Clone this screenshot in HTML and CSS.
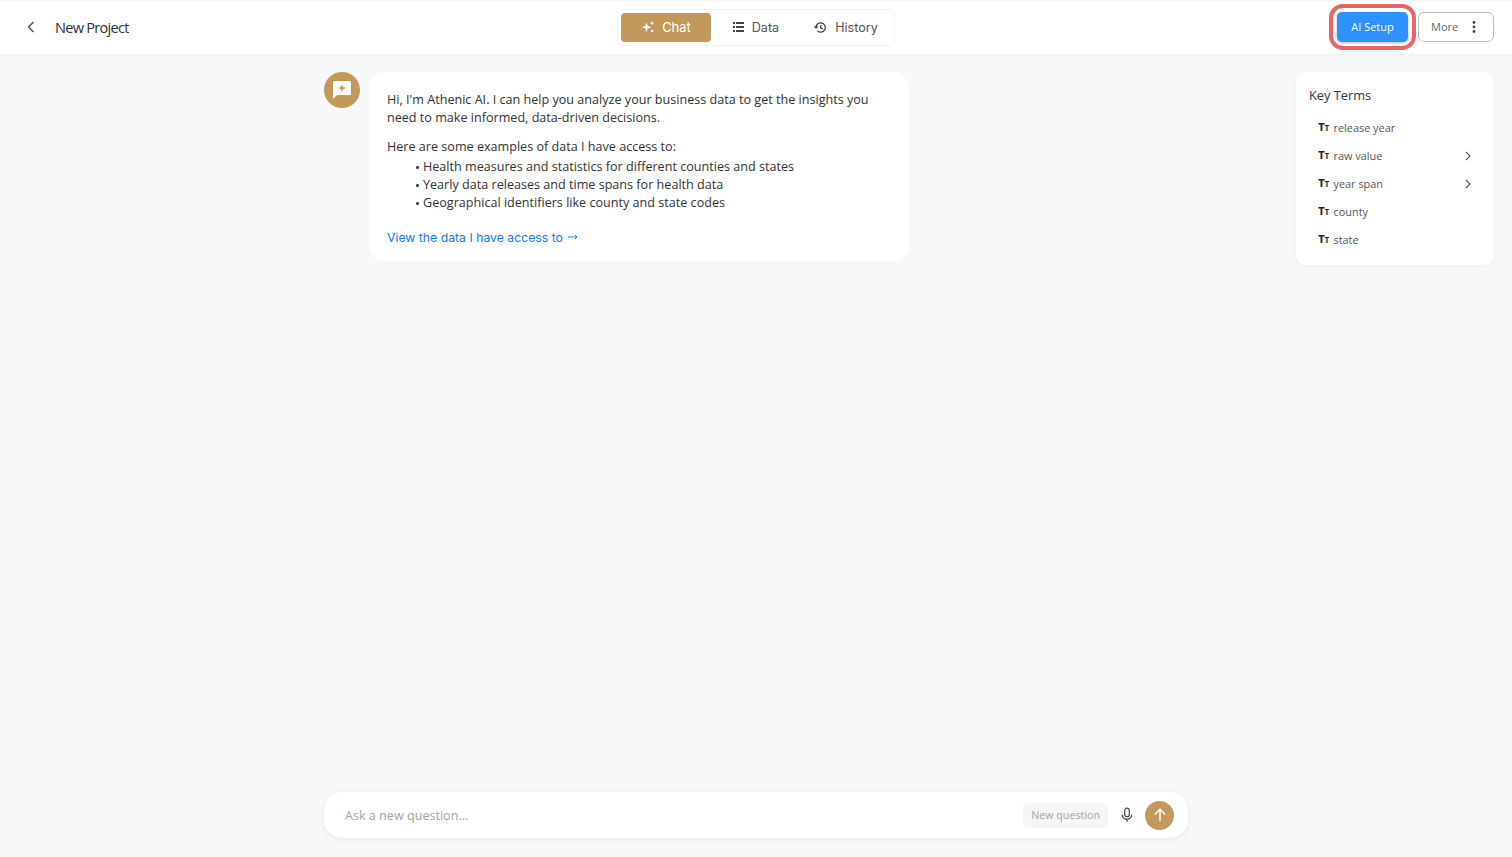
FILE: index.html
```html
<!DOCTYPE html>
<html>

<head>
    <title>New Project</title>
    <link rel="stylesheet" href="styles.css">
</head>

<body>
    <!-- Top bar -->
    <header class="topbar">
        <div class="topbar-left">
            <svg class="back-icon" width="16" height="16" viewBox="0 0 16 16" fill="none" stroke="#555" stroke-width="1.5">
                <path d="M10.5 3 5.500 8l5 5" />
            </svg>
            <span class="project-title">New Project</span>
        </div>
        <nav class="tabs">
            <div class="tab tab-active">
                <svg width="14" height="14" viewBox="0 0 14 14" fill="#fff">
                    <path d="M5.500 2.500 6.800 6 10.200 7.300 6.800 8.600 5.500 12 4.200 8.600 .8 7.300 4.200 6Z" />
                    <path d="M11 1 11.600 2.600 13.200 3.200 11.600 3.800 11 5.400 10.400 3.800 8.800 3.200 10.400 2.600Z" />
                    <circle cx="11.200" cy="11" r="1.200" />
                </svg>
                Chat
            </div>
            <div class="tab tab-data">
                <svg width="11" height="10" viewBox="0 0 11 10" fill="#444">
                    <rect x="0" y="0" width="2" height="2" />
                    <rect x="3" y="0" width="8" height="2" />
                    <rect x="0" y="4" width="2" height="2" />
                    <rect x="3" y="4" width="8" height="2" />
                    <rect x="0" y="8" width="2" height="2" />
                    <rect x="3" y="8" width="8" height="2" />
                </svg>
                Data
            </div>
            <div class="tab tab-history">
                <svg width="13" height="13" viewBox="0 0 14 14" fill="none" stroke="#444" stroke-width="1.400">
                    <path d="M2.200 7a5 5 0 1 1 1.500 3.600" />
                    <path d="M.6 5.600 2.200 7.400 4 5.800" />
                    <path d="M7.200 4.200V7.400L9.400 8.600" />
                </svg>
                History
            </div>
        </nav>
        <div class="topbar-right">
            <div class="setup-ring">
                <button class="setup-button">AI Setup</button>
            </div>
            <button class="more-button">
                More
                <svg width="4" height="12" viewBox="0 0 4 12" fill="#444">
                    <circle cx="2" cy="1.500" r="1.400" />
                    <circle cx="2" cy="6" r="1.400" />
                    <circle cx="2" cy="10.500" r="1.400" />
                </svg>
            </button>
        </div>
    </header>

    <main class="content">
        <div class="spacer"></div>

        <!-- Chat column -->
        <section class="chat">
            <div class="messages">
                <div class="avatar">
                    <svg width="20" height="20" viewBox="0 0 20 20">
                        <path fill="#fff" d="M2.500 1h15A1.500 1.500 0 0 1 19 2.500v11a1.500 1.500 0 0 1-1.500 1.500H5L1 19V2.500A1.500 1.500 0 0 1 2.500 1Z" />
                        <path fill="#c1995a" d="M10 4.200 11.100 7 13.900 8.100 11.100 9.200 10 12 8.900 9.200 6.100 8.100 8.900 7Z" />
                    </svg>
                </div>
                <div class="bubble">
                    <p class="intro">Hi, I'm Athenic AI. I can help you analyze your business data to get the insights you need to make informed, data-driven decisions.</p>
                    <p class="list-title">Here are some examples of data I have access to:</p>
                    <ul class="examples">
                        <li>Health measures and statistics for different counties and states</li>
                        <li>Yearly data releases and time spans for health data</li>
                        <li>Geographical identifiers like county and state codes</li>
                    </ul>
                    <a class="data-link" href="#">View the data I have access to
                        <svg width="10" height="6" viewBox="0 0 10 6" fill="none" stroke="#1677ff" stroke-width="1"><path d="M0 3h9M7 1l2 2-2 2" /></svg>
                    </a>
                </div>
            </div>

            <!-- Question box -->
            <div class="ask-bar">
                <span class="ask-placeholder">Ask a new question...</span>
                <span class="new-question">New question</span>
                <svg class="mic" width="12" height="16" viewBox="0 0 14 18" fill="none" stroke="#444" stroke-width="1.400">
                    <rect x="4.300" y="1" width="5.400" height="10" rx="2.700" />
                    <path d="M1.500 8.500a5.500 5.500 0 0 0 11 0" />
                    <path d="M7 14v3" />
                </svg>
                <div class="send">
                    <svg width="14" height="14" viewBox="0 0 14 14" fill="none" stroke="#fff" stroke-width="1.500">
                        <path d="M7 13V1.500" />
                        <path d="M1.800 6.500 7 1.300l5.200 5.200" />
                    </svg>
                </div>
            </div>
        </section>

        <!-- Key terms -->
        <div class="side">
            <aside class="terms">
                <h2>Key Terms</h2>
                <ul class="term-list">
                    <li><span class="tt">T<small>T</small></span>release year</li>
                    <li><span class="tt">T<small>T</small></span>raw value
                        <svg class="chevron" width="8" height="10" viewBox="0 0 8 10" fill="none" stroke="#555" stroke-width="1.100"><path d="M2 1l4 4-4 4" /></svg>
                    </li>
                    <li><span class="tt">T<small>T</small></span>year span
                        <svg class="chevron" width="8" height="10" viewBox="0 0 8 10" fill="none" stroke="#555" stroke-width="1.100"><path d="M2 1l4 4-4 4" /></svg>
                    </li>
                    <li><span class="tt">T<small>T</small></span>county</li>
                    <li><span class="tt">T<small>T</small></span>state</li>
                </ul>
            </aside>
        </div>
    </main>
</body>

</html>
```
FILE: styles.css
```css
* {
    box-sizing: border-box;
}

body {
    margin: 0;
    height: 100vh;
    display: flex;
    flex-direction: column;
    overflow: hidden;
    font-family: 'Open Sans', sans-serif;
    background-color: #f7f8fa;
    color: #333;
}

.topbar {
    margin-top: 1px;
    height: 53px;
    padding-bottom: 1px;
    flex-shrink: 0;
    display: grid;
    grid-template-columns: 1fr auto 1fr;
    align-items: center;
    background-color: #fff;
    box-shadow: 0 1px 4px rgba(0, 0, 0, 0.05);
}

.topbar-left {
    display: flex;
    align-items: center;
    padding-left: 23px;
}

.back-icon {
    margin-right: 16px;
}

.project-title {
    font-size: 14.600px;
    letter-spacing: -0.75px;
    color: #333;
}

.tabs {
    width: 278px;
    height: 37px;
    display: flex;
    align-items: center;
    padding: 0 3px;
    background-color: #fff;
    border: 1px solid #f1f1f3;
    border-radius: 6px;
}

.tab {
    height: 29px;
    flex: 1;
    display: flex;
    align-items: center;
    justify-content: center;
    gap: 7px;
    font-family: 'Inter', sans-serif;
    font-size: 12.600px;
    color: #555;
    white-space: nowrap;
}

.tab svg {
    flex-shrink: 0;
}

.tab-active {
    flex: 0 0 90px;
    background-color: #c1995a;
    border-radius: 4px;
    color: #fff;
    font-size: 13px;
}

.tab-data {
    gap: 8px;
}

.tab-history {
    gap: 8px;
}

.topbar-right {
    display: flex;
    align-items: center;
    justify-content: flex-end;
    padding-right: 18px;
}

.setup-ring {
    padding: 4px;
    border: 4px solid #e96464;
    border-radius: 14px;
    margin-right: 2px;
}

.setup-button {
    display: block;
    width: 71px;
    height: 30px;
    padding: 0 0 2px;
    border: none;
    border-radius: 5px;
    background-color: #2d91ff;
    color: #fff;
    font-family: 'Open Sans', sans-serif;
    font-size: 11px;
    box-shadow: 0 1px 3px rgba(0, 0, 0, 0.3);
}

.more-button {
    width: 76px;
    height: 30px;
    display: flex;
    align-items: center;
    justify-content: space-between;
    padding: 0 17px 2px 12px;
    background-color: #fff;
    border: 1px solid #bbb;
    border-radius: 6px;
    font-family: 'Open Sans', sans-serif;
    font-size: 11px;
    color: #666;
}

.more-button svg {
    margin-top: 2px;
}

.content {
    flex: 1;
    min-height: 0;
    display: grid;
    grid-template-columns: 1fr 864px 1fr;
}

.chat {
    display: flex;
    flex-direction: column;
    justify-content: space-between;
    padding: 18px 0 19px;
}

.messages {
    display: flex;
    gap: 9px;
}

.avatar {
    width: 36px;
    height: 36px;
    flex-shrink: 0;
    display: flex;
    align-items: center;
    justify-content: center;
    border-radius: 50%;
    background-color: #c1995a;
}

.bubble {
    width: 540px;
    height: 189px;
    padding: 19px 18px;
    background-color: #fff;
    border-radius: 16px;
    font-size: 12.600px;
    line-height: 18px;
    color: #333;
}

.bubble p {
    margin: 0;
}

.bubble .intro {
    margin-bottom: 11px;
}

.examples {
    list-style: none;
    margin: 2px 0 17px;
    padding: 0 0 0 28px;
}

.examples li {
    position: relative;
    padding-left: 8px;
}

.examples li::before {
    content: "";
    position: absolute;
    left: 1px;
    top: 8px;
    width: 2.500px;
    height: 2.500px;
    border-radius: 50%;
    background-color: #444;
}

.data-link {
    font-family: 'Inter', sans-serif;
    font-size: 12.250px;
    color: #1677ff;
    text-decoration: none;
}

.data-link svg {
    margin-left: 2px;
    vertical-align: 2px;
}

.ask-bar {
    height: 46px;
    display: flex;
    align-items: center;
    padding: 0 14px 0 21px;
    background-color: #fff;
    border-radius: 18px;
    box-shadow: 0 1px 5px rgba(0, 0, 0, 0.08);
}

.ask-placeholder {
    flex: 1;
    font-size: 12.600px;
    color: #a3a3a3;
}

.new-question {
    padding: 4px 8px;
    background-color: #f6f6f6;
    border-radius: 5px;
    font-size: 10.700px;
    line-height: 17px;
    color: #a3a3a3;
}

.mic {
    margin: 0 12px 0 13px;
}

.send {
    width: 29px;
    height: 29px;
    display: flex;
    align-items: center;
    justify-content: center;
    border-radius: 50%;
    background-color: #c1995a;
}

.side {
    display: flex;
    justify-content: flex-end;
    align-items: flex-start;
    padding: 18px 18px 0 0;
}

.terms {
    width: 198px;
    height: 193px;
    padding: 14px 14px 0 13px;
    background-color: #fff;
    border-radius: 10px;
    box-shadow: 0 1px 4px rgba(0, 0, 0, 0.04);
}

.terms h2 {
    margin: 0 0 9px;
    font-size: 12.800px;
    font-weight: 400;
    line-height: 18px;
    color: #333;
}

.term-list {
    list-style: none;
    margin: 0;
    padding: 0 8px 0 9px;
}

.term-list li {
    height: 28px;
    display: flex;
    align-items: center;
    font-size: 10.900px;
    color: #555;
}

.tt {
    width: 15.500px;
    font-family: 'Inter', sans-serif;
    font-size: 10px;
    font-weight: 800;
    letter-spacing: -0.3px;
    color: #222;
}

.tt small {
    font-size: 7px;
}

.chevron {
    margin-left: auto;
    margin-top: 2px;
}
```
